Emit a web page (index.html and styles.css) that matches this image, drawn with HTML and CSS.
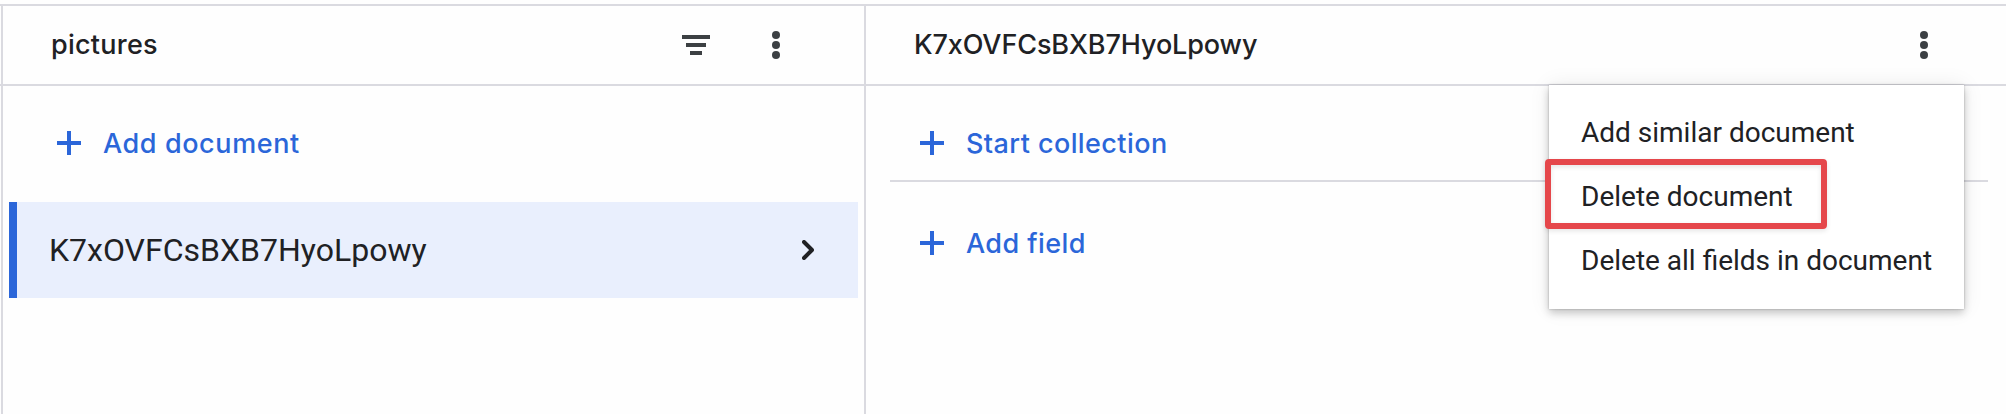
FILE: index.html
```html
<!DOCTYPE html>
<html lang="en">
<head>
<meta charset="utf-8">
<title>Firestore data</title>
<link rel="stylesheet" href="styles.css">
</head>
<body>
<main class="viewer">
  <section class="panel panel-docs">
    <header class="panel-header">
      <h2 class="panel-title title-collection">pictures</h2>
      <svg class="icon-filter" width="28" height="20" viewBox="0 0 28 20"><path d="M0 0h28v4H0zM4 8h20v4H4zM8 16h12v4H8z"/></svg>
      <svg class="icon-more" width="8" height="28" viewBox="0 0 8 28"><circle cx="4" cy="4" r="4"/><circle cx="4" cy="14" r="4"/><circle cx="4" cy="24" r="4"/></svg>
    </header>
    <a class="action action-doc">
      <svg width="24" height="24" viewBox="0 0 24 24"><path d="M10 0h4v10h10v4H14v10h-4V14H0v-4h10z"/></svg>
      <span class="label label-doc">Add document</span>
    </a>
    <div class="doc-row">
      <span class="doc-id">K7xOVFCsBXB7HyoLpowy</span>
      <svg class="chevron" width="12" height="20" viewBox="0 0 12 20"><path d="M2 2l8 8-8 8"/></svg>
    </div>
  </section>
  <section class="panel panel-fields">
    <header class="panel-header">
      <h2 class="panel-title title-document">K7xOVFCsBXB7HyoLpowy</h2>
      <svg class="icon-more" width="8" height="28" viewBox="0 0 8 28"><circle cx="4" cy="4" r="4"/><circle cx="4" cy="14" r="4"/><circle cx="4" cy="24" r="4"/></svg>
    </header>
    <a class="action action-collection">
      <svg width="24" height="24" viewBox="0 0 24 24"><path d="M10 0h4v10h10v4H14v10h-4V14H0v-4h10z"/></svg>
      <span class="label">Start collection</span>
    </a>
    <a class="action action-field">
      <svg width="24" height="24" viewBox="0 0 24 24"><path d="M10 0h4v10h10v4H14v10h-4V14H0v-4h10z"/></svg>
      <span class="label">Add field</span>
    </a>
  </section>
  <div class="menu">
    <div class="menu-item">Add similar document</div>
    <div class="menu-item">Delete document</div>
    <div class="menu-item">Delete all fields in document</div>
    <div class="callout"></div>
  </div>
</main>
</body>
</html>
```

FILE: styles.css
```css
* { box-sizing: border-box; }
body {
  margin: 0;
  background: #fefefe;
  color: #202124;
  font-family: Roboto, sans-serif;
  overflow: hidden;
}
svg { display: block; flex: none; }
.viewer {
  position: relative;
  display: flex;
  height: 414px;
  padding-top: 4px;
}
.panel { border-top: 2px solid #dadae0; }
.panel-docs {
  width: 864px;
  padding-left: 1px;
  background: linear-gradient(#dadae0, #dadae0) 1px 0 / 2px 100% no-repeat;
}
.panel-fields {
  flex: 1;
  background: linear-gradient(#dadae0, #dadae0) 0 0 / 2px 100% no-repeat;
}
.panel-header {
  display: flex;
  align-items: center;
  height: 80px;
  border-bottom: 2px solid #dadae0;
  fill: #3c4043;
}
.panel-docs .panel-header { margin-left: -1px; padding: 0 84px 0 51px; }
.panel-fields .panel-header { padding: 0 78px 0 50px; }
.panel-title {
  flex: 1;
  margin: 0;
  font: 500 27px/40px Inter, sans-serif;
  white-space: nowrap;
}
.title-collection { letter-spacing: 0.25px; }
.title-document { letter-spacing: -0.1px; }
.icon-filter { margin-right: 62px; }
.action {
  display: flex;
  align-items: center;
  gap: 22px;
  color: #2b66d9;
  fill: currentColor;
  font: 500 27px/40px Inter, sans-serif;
  white-space: nowrap;
}
.label { padding-top: 2px; letter-spacing: 0.42px; }
.label-doc { letter-spacing: 0.6px; }
.action-doc { height: 116px; padding: 0 0 2px 56px; }
.action-collection {
  height: 96px;
  margin: 0 18px 0 26px;
  padding: 20px 0 0 30px;
  border-bottom: 2px solid #dadae0;
}
.action-field { height: 122px; padding-left: 56px; }
.doc-row {
  display: flex;
  align-items: center;
  justify-content: space-between;
  height: 96px;
  margin: 0 6px 0 8px;
  padding: 0 44px 0 32px;
  border-left: 8px solid #2b66d9;
  background: #e9effd;
}
.doc-id { font-size: 32px; line-height: 40px; }
.chevron path {
  fill: none;
  stroke: #202124;
  stroke-width: 4;
  stroke-linecap: round;
  stroke-linejoin: round;
}
.menu {
  position: absolute;
  left: 1549px;
  top: 85px;
  width: 415px;
  height: 224px;
  padding: 16px 0;
  background: #fff;
  box-shadow: 0 0 2px rgba(0,0,0,.25), 0 4px 8px rgba(0,0,0,.2), 0 0 20px rgba(0,0,0,.08);
}
.menu-item {
  height: 64px;
  padding-left: 32px;
  font-size: 28px;
  line-height: 64px;
  white-space: nowrap;
}
.callout {
  position: absolute;
  left: -4px;
  top: 74px;
  width: 282px;
  height: 70px;
  border: 6px solid #e5474b;
  border-radius: 4px;
  box-shadow: 0 2px 5px rgba(0,0,0,.1), inset 0 2px 5px rgba(0,0,0,.1);
}
```
